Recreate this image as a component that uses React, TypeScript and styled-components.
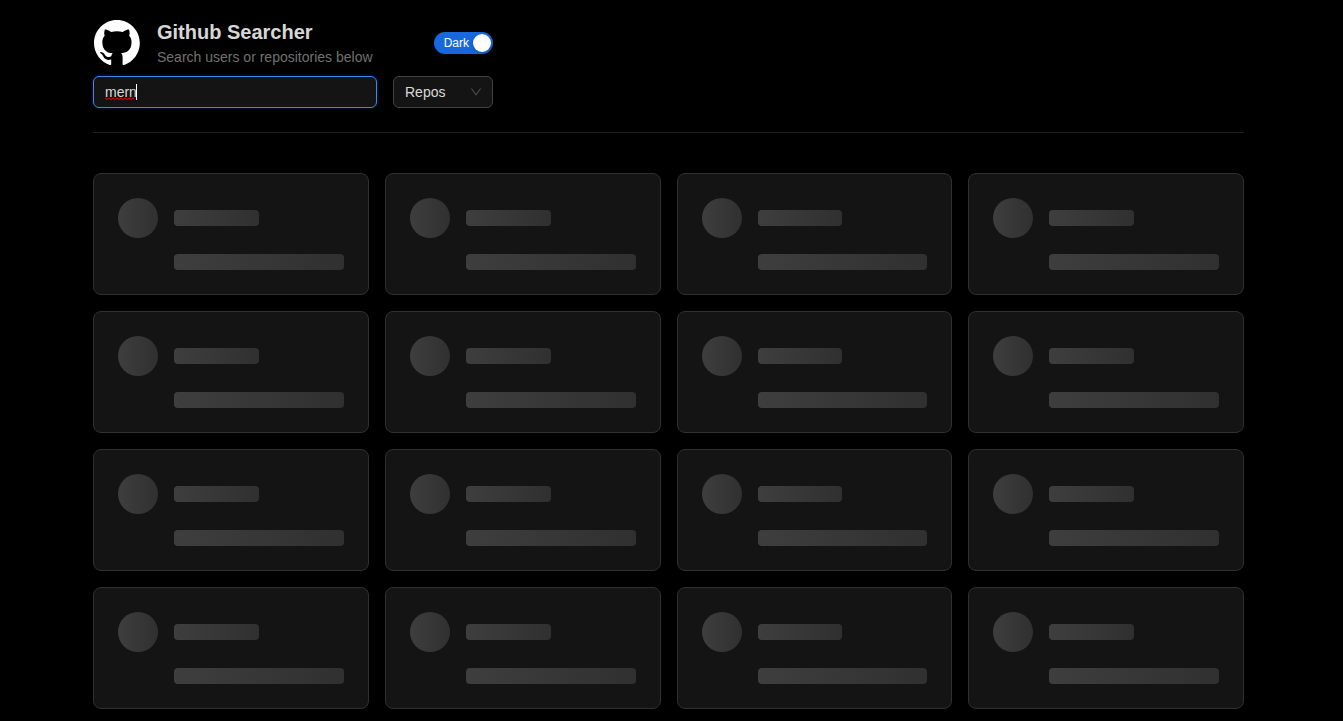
import React, { useState } from "react";
import styled, { createGlobalStyle } from "styled-components";

const GlobalStyle = createGlobalStyle`
  *, *::before, *::after { box-sizing: border-box; }
  body {
    margin: 0;
    background: #000;
    color: rgba(255, 255, 255, 0.85);
    font-family: "Liberation Sans", Arial, sans-serif;
    font-size: 14px;
    line-height: 22px;
  }
`;

const Page = styled.div`
  padding: 20px 99px 12px 93px;
`;

const Header = styled.header`
  display: flex;
  flex-direction: column;
  gap: 10px;
  max-width: 400px;
`;

const Brand = styled.div`
  display: flex;
  align-items: center;
  gap: 16px;
  height: 46px;
`;

const Logo = styled.svg`
  flex: none;
  width: 48px;
  height: 46px;
  fill: #fff;
`;

const Titles = styled.div`
  flex: 1;
`;

const Title = styled.h1`
  margin: 0;
  font-size: 20px;
  font-weight: 700;
  line-height: 28px;
`;

const Subtitle = styled.p`
  margin: 0;
  color: rgba(255, 255, 255, 0.45);
`;

const Switch = styled.label`
  display: flex;
  align-items: center;
  gap: 4px;
  height: 22px;
  padding: 0 2px 0 9px;
  min-width: 59px;
  justify-content: flex-end;
  border-radius: 11px;
  background: #1668dc;
  color: #fff;
  font-size: 12px;
  cursor: pointer;
`;

const SwitchInput = styled.input`
  appearance: none;
  width: 18px;
  height: 18px;
  margin: 0;
  border-radius: 50%;
  background: #fff;
  box-shadow: 0 2px 4px rgba(0, 35, 11, 0.2);
  cursor: pointer;
`;

const Filters = styled.form`
  display: flex;
  gap: 16px;
`;

const SearchBox = styled.div`
  position: relative;
  flex: 1;
  min-width: 0;
`;

const SearchInput = styled.input`
  display: block;
  width: 100%;
  height: 32px;
  padding: 4px 11px;
  border: 1px solid #3c89e8;
  border-radius: 6px;
  outline: 0;
  background: #141414;
  box-shadow: 0 0 0 2px rgba(0, 60, 180, 0.15);
  caret-color: transparent;
  color: inherit;
  font: inherit;
`;

const SpellingMark = styled.svg`
  position: absolute;
  top: 8px;
  left: 12px;
  width: 32px;
  height: 16px;
  pointer-events: none;
`;

const SelectBox = styled.div`
  position: relative;
  flex: none;
  width: 100px;
`;

const Select = styled.select`
  appearance: none;
  width: 100%;
  height: 32px;
  padding: 0 11px;
  border: 1px solid #424242;
  border-radius: 6px;
  outline: 0;
  background: #141414;
  color: inherit;
  font: inherit;
`;

const Arrow = styled.svg`
  position: absolute;
  top: 10px;
  right: 11px;
  width: 12px;
  height: 12px;
  fill: rgba(255, 255, 255, 0.25);
  pointer-events: none;
`;

const Divider = styled.hr`
  height: 1px;
  margin: 24px 0 40px;
  border: 0;
  background: rgba(253, 253, 253, 0.12);
`;

const Results = styled.main`
  display: grid;
  grid-template-columns: repeat(4, minmax(0, 1fr));
  gap: 16px;
`;

const Card = styled.article`
  display: flex;
  gap: 16px;
  height: 122px;
  padding: 24px;
  border: 1px solid #303030;
  border-radius: 8px;
  background: #141414;
`;

const Shimmer = styled.div`
  background: linear-gradient(90deg, #3e3e3e, #303030);
`;

const Avatar = styled(Shimmer)`
  flex: none;
  width: 40px;
  height: 40px;
  border-radius: 50%;
`;

const Lines = styled.div`
  display: flex;
  flex: 1;
  flex-direction: column;
  gap: 28px;
  padding-top: 12px;
`;

const Line = styled(Shimmer)<{ $width: string }>`
  width: ${(p) => p.$width};
  height: 16px;
  border-radius: 4px;
`;

function SkeletonCard() {
  return (
    <Card>
      <Avatar />
      <Lines>
        <Line $width="50%" />
        <Line $width="100%" />
      </Lines>
    </Card>
  );
}

export default function App() {
  const [query, setQuery] = useState("mern");
  const [kind, setKind] = useState("repos");

  return (
    <>
      <GlobalStyle />
      <Page>
        <Header>
          <Brand>
            <Logo viewBox="-1 0 100 98" aria-hidden="true">
              <path
                fillRule="evenodd"
                clipRule="evenodd"
                d="M48.854 0C21.839 0 0 22 0 49.217c0 21.756 13.993 40.172 33.405 46.69 2.427.49 3.316-1.059 3.316-2.362 0-1.141-.08-5.052-.08-9.127-13.59 2.934-16.42-5.867-16.42-5.867-2.184-5.704-5.42-7.17-5.42-7.17-4.448-3.015.324-3.015.324-3.015 4.934.326 7.523 5.052 7.523 5.052 4.367 7.496 11.404 5.378 14.235 4.074.404-3.178 1.699-5.378 3.074-6.6-10.839-1.141-22.243-5.378-22.243-24.283 0-5.378 1.94-9.778 5.014-13.2-.485-1.222-2.184-6.275.486-13.038 0 0 4.125-1.304 13.426 5.052a46.97 46.97 0 0 1 12.214-1.63c4.125 0 8.33.571 12.213 1.63 9.302-6.356 13.427-5.052 13.427-5.052 2.67 6.763.97 11.816.485 13.038 3.155 3.422 5.015 7.822 5.015 13.2 0 18.905-11.404 23.06-22.324 24.283 1.78 1.548 3.316 4.481 3.316 9.126 0 6.6-.08 11.897-.08 13.526 0 1.304.89 2.853 3.316 2.364 19.412-6.52 33.405-24.935 33.405-46.691C97.707 22 75.788 0 48.854 0z"
              />
            </Logo>
            <Titles>
              <Title>Github Searcher</Title>
              <Subtitle>Search users or repositories below</Subtitle>
            </Titles>
            <Switch>
              Dark
              <SwitchInput type="checkbox" role="switch" defaultChecked />
            </Switch>
          </Brand>
          <Filters onSubmit={(e) => e.preventDefault()}>
            <SearchBox>
              <SearchInput
                type="text"
                aria-label="Search"
                value={query}
                onChange={(e) => setQuery(e.target.value)}
                spellCheck={false}
              />
              {query === "mern" && (
                <SpellingMark viewBox="0 0 32 16" aria-hidden="true">
                  <path
                    d="M0 14l2 1.500 2-1.500 2 1.500 2-1.500 2 1.500 2-1.500 2 1.500 2-1.500 2 1.500 2-1.500 2 1.500 2-1.500 2 1.500 2-1.500 1 .7"
                    fill="none"
                    stroke="#f00"
                    strokeWidth="1"
                  />
                  <rect x="31" width="1" height="16" fill="#fff" />
                </SpellingMark>
              )}
            </SearchBox>
            <SelectBox>
              <Select
                aria-label="Search type"
                value={kind}
                onChange={(e) => setKind(e.target.value)}
              >
                <option value="users">Users</option>
                <option value="repos">Repos</option>
              </Select>
              <Arrow viewBox="64 64 896 896" aria-hidden="true">
                <path d="M884 256h-75c-5.1 0-9.900 2.500-12.900 6.600L512 654.200 227.900 262.600c-3-4.100-7.800-6.600-12.900-6.600h-75c-6.500 0-10.300 7.400-6.500 12.700l352.600 486.100c12.800 17.600 39 17.600 51.700 0l352.600-486.100c3.900-5.300.1-12.700-6.400-12.700z" />
              </Arrow>
            </SelectBox>
          </Filters>
        </Header>
        <Divider />
        <Results aria-busy="true" aria-label="Loading results">
          {Array.from({ length: 16 }, (_, i) => (
            <SkeletonCard key={i} />
          ))}
        </Results>
      </Page>
    </>
  );
}
